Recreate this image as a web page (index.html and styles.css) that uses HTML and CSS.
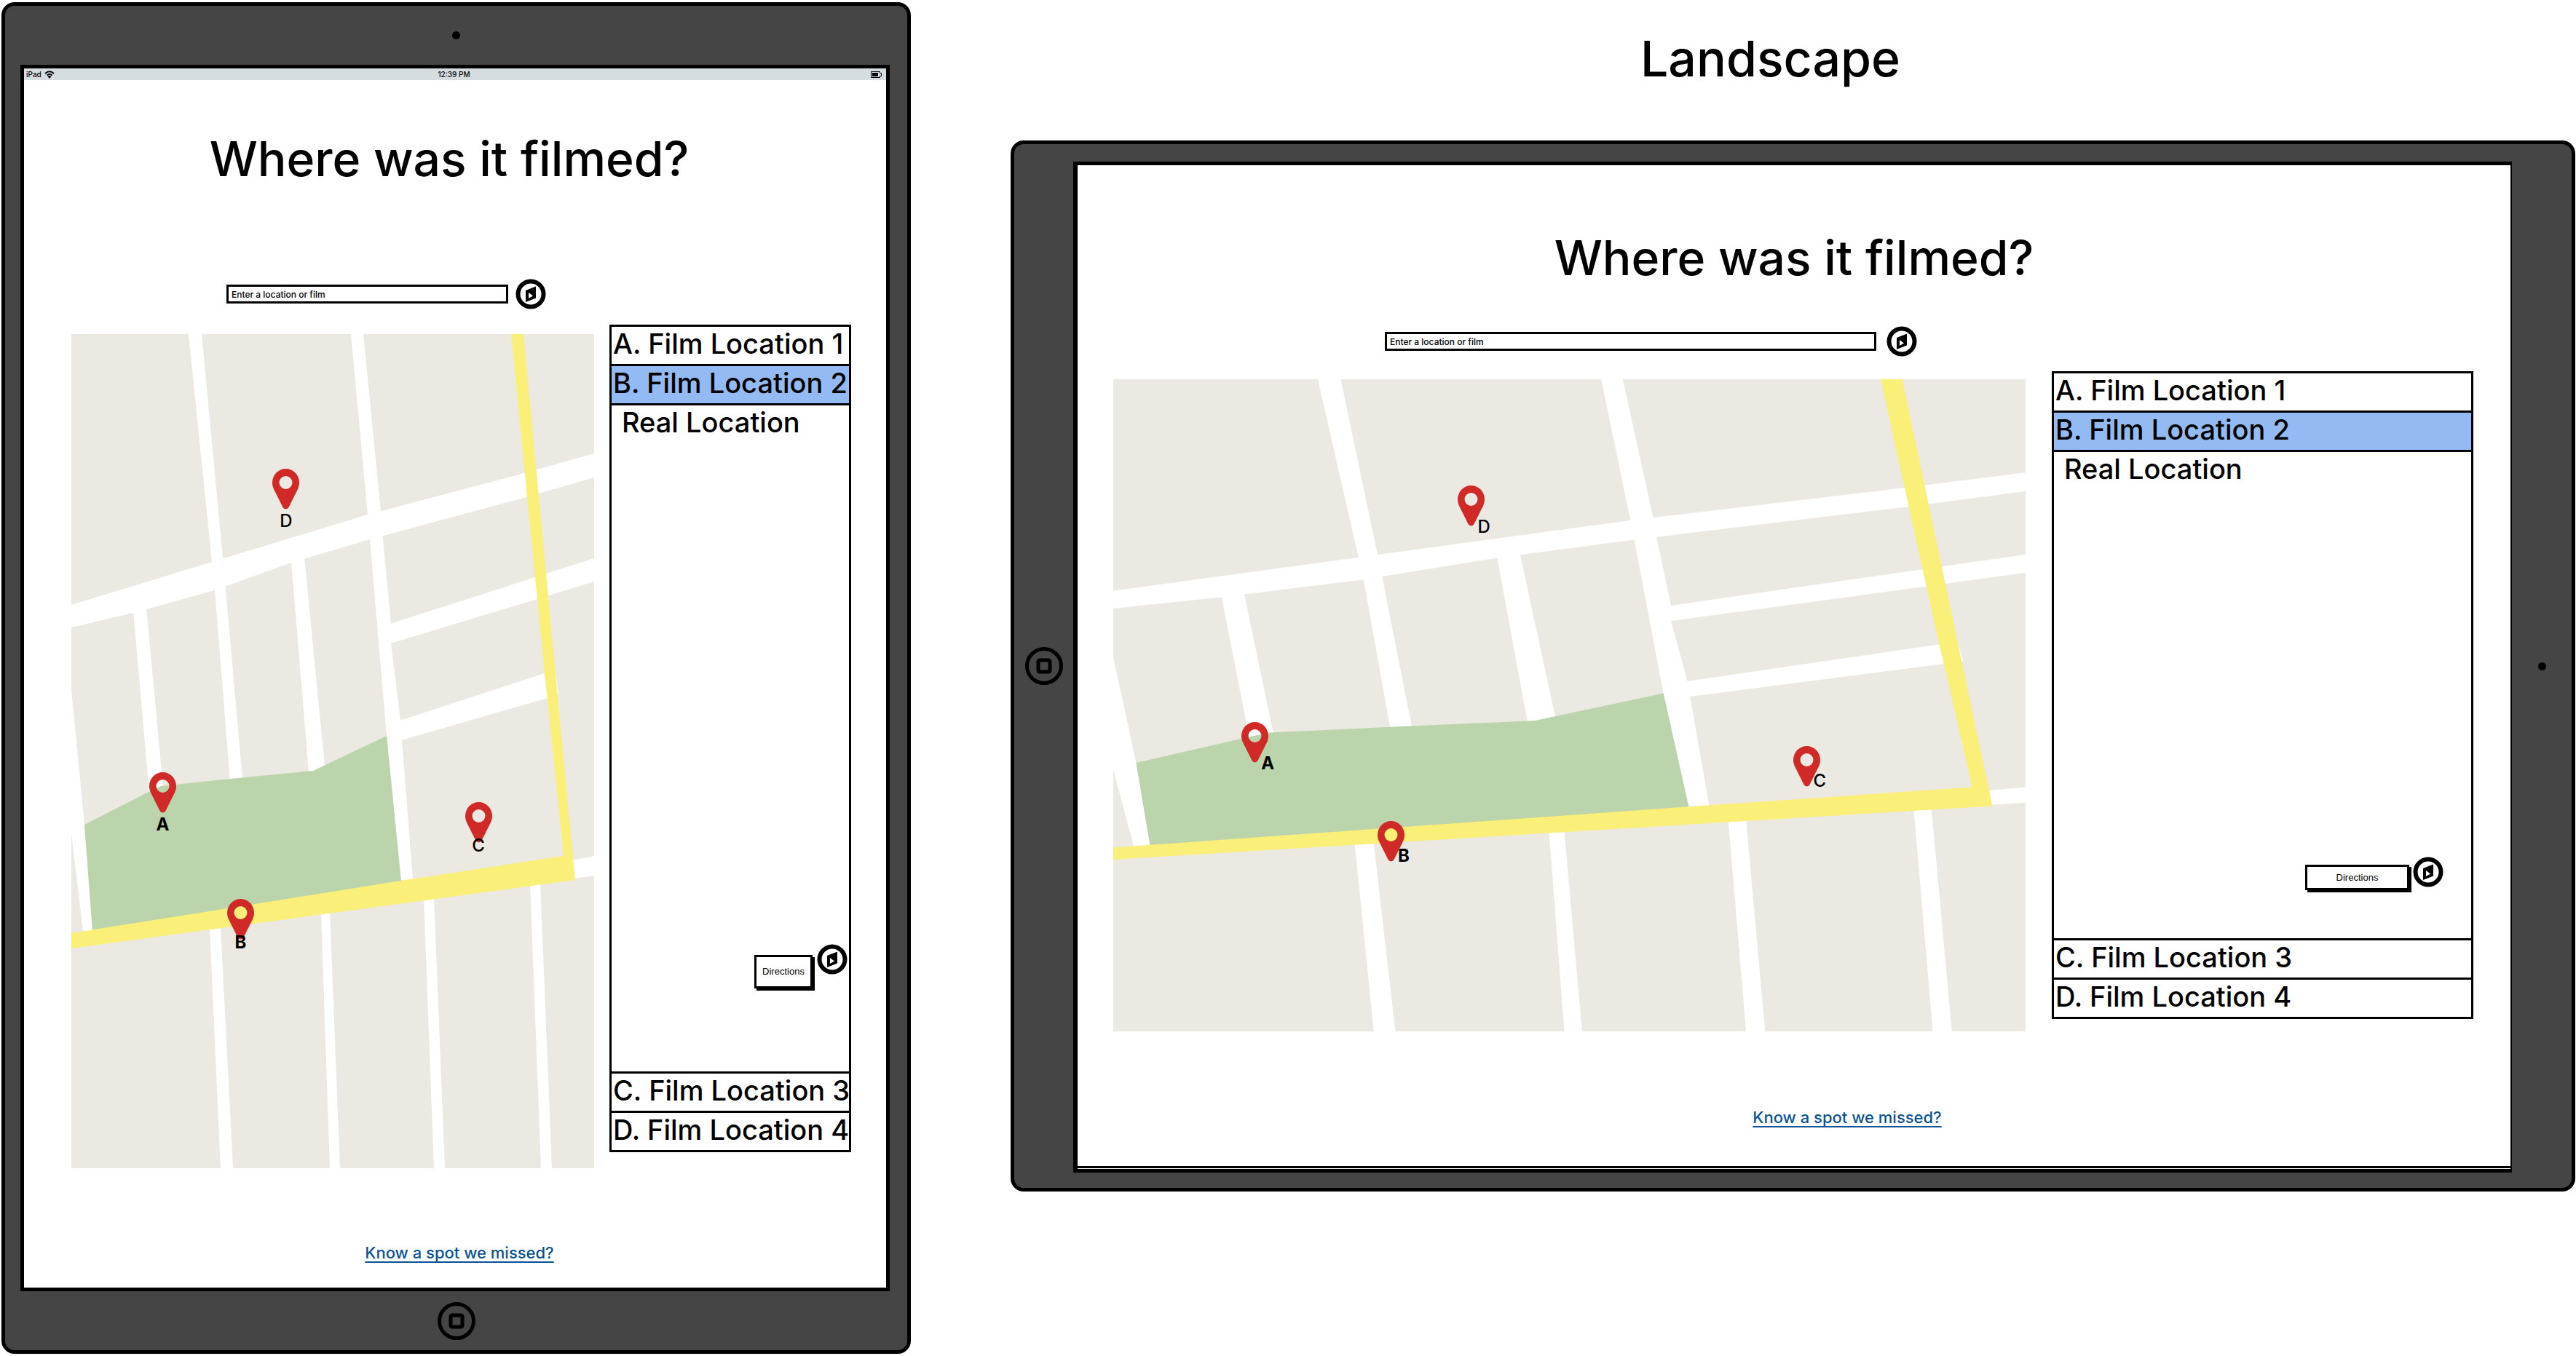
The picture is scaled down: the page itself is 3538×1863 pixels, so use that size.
FILE: index.html
```html
<!DOCTYPE html>
<html lang="en">
<head>
<meta charset="utf-8">
<title>Where was it filmed?</title>
<link rel="stylesheet" href="styles.css">
</head>
<body>
<svg class="defs" aria-hidden="true">
  <symbol id="compass" viewBox="0 0 42 42">
    <circle cx="21" cy="21" r="17.5" fill="#fff" stroke="#000" stroke-width="6"/>
    <path fill-rule="evenodd" d="M14 16L28 10.500V26.500L14 32ZM18 19V27L24 23.500Z"/>
  </symbol>
  <symbol id="pin" viewBox="0 0 37 56">
    <path fill="#cf2a27" fill-rule="evenodd" d="M18.500 0A18.500 19 0 0 1 37 19C37 22 36.500 24.500 35 28L22.500 53A4.500 4.500 0 0 1 14.500 53L2 28C.500 24.500 0 22 0 19A18.500 19 0 0 1 18.500 0ZM18.500 10A9 9 0 1 0 18.500 28A9 9 0 1 0 18.500 10Z"/>
  </symbol>
  <symbol id="home" viewBox="0 0 52 52">
    <circle cx="26" cy="26" r="23.500" fill="none" stroke="#000" stroke-width="5"/>
    <rect x="18" y="18" width="16" height="16" rx="2" fill="none" stroke="#000" stroke-width="5"/>
  </symbol>
  <symbol id="streets" viewBox="0 0 718 1146" preserveAspectRatio="none">
    <rect width="718" height="1146" fill="#ece9e2"/>
    <g fill="#fff">
      <path d="M161 0H179L208 308L211 340L235 611V614H218L197 352L193 313Z"/>
      <path d="M384 0H401L425 244L428 282L439 398V425L452 531L454 558L469 750H453L433 552L410 282L407 248Z"/>
      <path d="M0 372L193 313L407 248L622 191L718 164V197L625 224L410 282L302 314L197 352L85 383L0 403Z"/>
      <path d="M85 380L103 376L124 601L126 622L107 630Z"/>
      <path d="M302 312L320 306L348 594L332 602H326Z"/>
      <path d="M438 398L637 334L718 308V340L640 364L438 425Z"/>
      <path d="M451 531L650 466H665L669 495L654 500L453 558Z"/>
      <path d="M0 489L11 601L18 674L29 820H16L0 686Z"/>
      <path d="M688 723L718 717V744L690 748Z"/>
      <path d="M190 816H205L222 1146H205Z"/>
      <path d="M343 796H355L369 1146H355Z"/>
      <path d="M484 774H498L513 1146H498Z"/>
      <path d="M630 756H644L660 1146H645Z"/>
    </g>
    <path fill="#bcd4ac" d="M18 674L108 628L123 621L218 611L332 600L433 552L453 753L29 820Z"/>
    <path fill="#faef78" d="M0 823L453 751L676 717L658 541L650 466L604 0H621L672 541L692 750L0 844Z"/>
  </symbol>
</svg>

<main class="board">
  <section class="device device-portrait" aria-label="Portrait">
    <div class="bezel"><span class="camera"></span></div>
    <div class="screen">
      <div class="status">
        <span class="carrier">iPad
          <svg class="wifi" viewBox="0 0 14 11"><path fill="none" stroke="#000" stroke-width="2" d="M1 4Q7 -1.500 13 4M3.500 6.500Q7 3.500 10.500 6.500"/><path d="M4.500 8Q7 6 9.500 8L7 11Z"/></svg>
        </span>
        <span>12:39 PM</span>
        <svg class="battery" viewBox="0 0 15 9"><path fill="none" stroke="#000" d="M.500 .500H12.500V2.500H14.500V6.500H12.500V8.500H.500Z"/><path d="M2 2H10V7H2Z"/></svg>
      </div>
      <h1>Where was it filmed?</h1>
      <form class="search">
        <input type="text" aria-label="Location or film" placeholder="Enter a location or film">
        <button type="button" class="icon-button" aria-label="Search"><svg><use href="#compass"/></svg></button>
      </form>
      <div class="content">
        <div class="map">
          <svg class="streets"><use href="#streets"/></svg>
          <div class="pin" style="left:17.4%;top:52.5%"><svg><use href="#pin"/></svg><b>A</b></div>
          <div class="pin near" style="left:32.3%;top:67.7%"><svg><use href="#pin"/></svg><b>B</b></div>
          <div class="pin near" style="left:77.8%;top:56.1%"><svg><use href="#pin"/></svg><span>C</span></div>
          <div class="pin" style="left:41%;top:16.1%"><svg><use href="#pin"/></svg><span>D</span></div>
        </div>
        <ul class="locations">
          <li><button type="button">A. Film Location 1</button></li>
          <li class="selected"><button type="button">B. Film Location 2</button></li>
          <li class="detail">
            <p>Real Location</p>
            <div class="actions">
              <button type="button" class="directions">Directions</button>
              <button type="button" class="icon-button" aria-label="Open compass"><svg><use href="#compass"/></svg></button>
            </div>
          </li>
          <li><button type="button">C. Film Location 3</button></li>
          <li><button type="button">D. Film Location 4</button></li>
        </ul>
      </div>
      <p class="missed"><a href="#missed">Know a spot we missed?</a></p>
    </div>
    <div class="bezel"><svg class="home"><use href="#home"/></svg></div>
  </section>

  <div class="landscape-column">
    <h2>Landscape</h2>
    <section class="device device-landscape" aria-label="Landscape">
      <div class="bezel"><svg class="home"><use href="#home"/></svg></div>
      <div class="screen">
        <div class="page">
          <h1>Where was it filmed?</h1>
          <form class="search">
            <input type="text" aria-label="Location or film" placeholder="Enter a location or film">
            <button type="button" class="icon-button" aria-label="Search"><svg><use href="#compass"/></svg></button>
          </form>
          <div class="content">
            <div class="map">
              <svg class="streets"><use href="#streets"/></svg>
              <div class="pin" style="left:15.5%;top:52.6%"><svg><use href="#pin"/></svg><b>A</b></div>
              <div class="pin near" style="left:30.4%;top:67.8%"><svg><use href="#pin"/></svg><b>B</b></div>
              <div class="pin near" style="left:76%;top:56.2%"><svg><use href="#pin"/></svg><span>C</span></div>
              <div class="pin" style="left:39.2%;top:16.3%"><svg><use href="#pin"/></svg><span>D</span></div>
            </div>
            <ul class="locations">
              <li><button type="button">A. Film Location 1</button></li>
              <li class="selected"><button type="button">B. Film Location 2</button></li>
              <li class="detail">
                <p>Real Location</p>
                <div class="actions">
                  <button type="button" class="directions">Directions</button>
                  <button type="button" class="icon-button" aria-label="Open compass"><svg><use href="#compass"/></svg></button>
                </div>
              </li>
              <li><button type="button">C. Film Location 3</button></li>
              <li><button type="button">D. Film Location 4</button></li>
            </ul>
          </div>
          <p class="missed"><a href="#missed">Know a spot we missed?</a></p>
        </div>
      </div>
      <div class="bezel"><span class="camera"></span></div>
    </section>
  </div>
</main>
</body>
</html>
```
FILE: styles.css
```css
* { box-sizing: border-box; }

body {
  margin: 0;
  background: #fff;
  color: #000;
  font-family: Inter, "Noto Sans", sans-serif;
  font-weight: 500;
}

h1, h2, p, ul { margin: 0; padding: 0; }
ul { list-style: none; }
svg { display: block; }
.defs { position: absolute; width: 0; height: 0; }

button, input {
  font: inherit;
  color: inherit;
  margin: 0;
  border-radius: 0;
}

h1, h2 {
  font-size: 68px;
  line-height: 84px;
  font-weight: 500;
  text-align: center;
}
h1 { font-size: 66px; }

.board {
  display: grid;
  grid-template-columns: 1249fr 2149fr;
  column-gap: 137px;
  align-items: start;
  padding: 3px 1px 3px 2px;
}

.landscape-column { padding-top: 35px; }
.landscape-column h2 { padding-right: 62px; margin-bottom: 71px; }

/* Tablet frames */
.device {
  display: grid;
  background: #454545;
  border: 5px solid #000;
  border-radius: 18px;
}
.device-portrait {
  grid-template-rows: 81px auto 81px;
  padding: 0 24px 0 21px;
}
.device-landscape {
  grid-template-columns: 81px 1fr 82px;
  padding: 24px 0 21px;
}
.bezel {
  display: flex;
  align-items: center;
  justify-content: center;
}
.device-landscape .bezel { padding-bottom: 3px; }
.device-portrait .bezel { padding-left: 3px; }
.camera {
  width: 11px;
  height: 11px;
  border-radius: 50%;
  background: #000;
}
.home { width: 52px; height: 52px; }

.screen {
  background: #fff;
  border: 5px solid #000;
}
.device-landscape .screen {
  border-width: 5px 2px 5px 6px;
  padding-bottom: 1px;
}
.page { border-bottom: 3px solid #000; }

.status {
  display: grid;
  grid-template-columns: 1fr auto 1fr;
  align-items: center;
  height: 16px;
  padding: 0 6px 0 3px;
  background: #d6dde0;
  font-size: 10px;
  line-height: 16px;
}
.carrier { display: flex; align-items: center; gap: 4px; }
.wifi { width: 14px; height: 11px; }
.battery { width: 15px; height: 9px; justify-self: end; }

.device-portrait h1 { padding: 66px 16px 0 0; }
.device-landscape h1 { padding-top: 85px; }

/* Search */
.search {
  display: flex;
  align-items: center;
}
.search input {
  height: 26px;
  padding: 0 4px;
  border: 3px solid #000;
  background: #fff;
  font-size: 12px;
  outline: 0;
}
.search input::placeholder { color: #000; opacity: 1; }
.device-portrait .search { margin: 123px 0 21px 278px; gap: 10px; }
.device-portrait .search input { width: 387px; }
.device-landscape .search { margin: 52px 0 20px 422px; gap: 14px; }
.device-landscape .search input { width: 675px; }

.icon-button {
  flex: none;
  padding: 0;
  border: 0;
  background: none;
}
.icon-button svg { width: 42px; height: 42px; }

/* Map and list */
.content { display: grid; }
.device-portrait .content {
  grid-template-columns: 718fr 332fr;
  column-gap: 21px;
  padding: 0 48px 0 65px;
}
.device-landscape .content {
  grid-template-columns: 1253fr 579fr;
  column-gap: 36px;
  padding: 0 51px 0 49px;
}

.map { position: relative; }
.device-portrait .map { margin-top: 13px; aspect-ratio: 718 / 1146; }
.device-landscape .map { margin-top: 11px; aspect-ratio: 1253 / 896; }
.streets { width: 100%; height: 100%; }

.pin {
  position: absolute;
  width: 37px;
  margin-left: -18px;
  font-size: 24px;
  line-height: 24px;
  text-align: center;
}
.pin svg { width: 37px; height: 56px; }
.pin span, .pin b { display: block; margin-top: 4px; }
.pin b { font-weight: 700; }
.pin.near span, .pin.near b { margin-top: -8px; position: relative; }
.device-landscape .pin span, .device-landscape .pin b {
  position: absolute;
  top: 45px;
  left: 18px;
  width: 36px;
  margin: 0;
}
.device-landscape .pin.near span, .device-landscape .pin.near b { top: 36px; }

.locations {
  min-width: 0;
  display: flex;
  flex-direction: column;
  border: 3px solid #000;
  font-size: 38px;
  line-height: 46px;
}
.device-portrait .locations { margin-bottom: 22px; }
.device-landscape .locations { margin-bottom: 17px; }
.locations li + li { border-top: 3px solid #000; }
.locations li > button {
  display: block;
  width: 100%;
  padding: 0 0 5px 2px;
  border: 0;
  background: none;
  text-align: left;
  white-space: nowrap;
}
.locations .selected { background: #94baf3; }

.detail {
  flex: 1;
  display: flex;
  flex-direction: column;
  justify-content: space-between;
}
.detail p { padding-left: 14px; }
.actions {
  display: flex;
  align-items: flex-start;
  justify-content: flex-end;
}
.device-portrait .actions { gap: 6px; padding: 0 2px 114px 0; }
.device-landscape .actions { gap: 5px; padding: 0 38px 66px 0; }

.directions {
  padding: 0;
  border: 3px solid #000;
  background: #fff;
  box-shadow: 3px 3px 0 #000;
  font: 13px/16px "Liberation Sans", Arial, sans-serif;
}
.device-portrait .directions { width: 80px; height: 46px; margin-top: 15px; }
.device-landscape .directions { width: 143px; height: 35px; margin-top: 11px; }

.missed {
  font-size: 22px;
  line-height: 28px;
  text-align: center;
}
.missed a { color: #0b5394; text-decoration-thickness: 2px; text-underline-offset: 4px; }
.device-portrait .missed { padding: 102px 0 34px 12px; }
.device-landscape .missed { padding: 104px 0 53px 146px; }
```
